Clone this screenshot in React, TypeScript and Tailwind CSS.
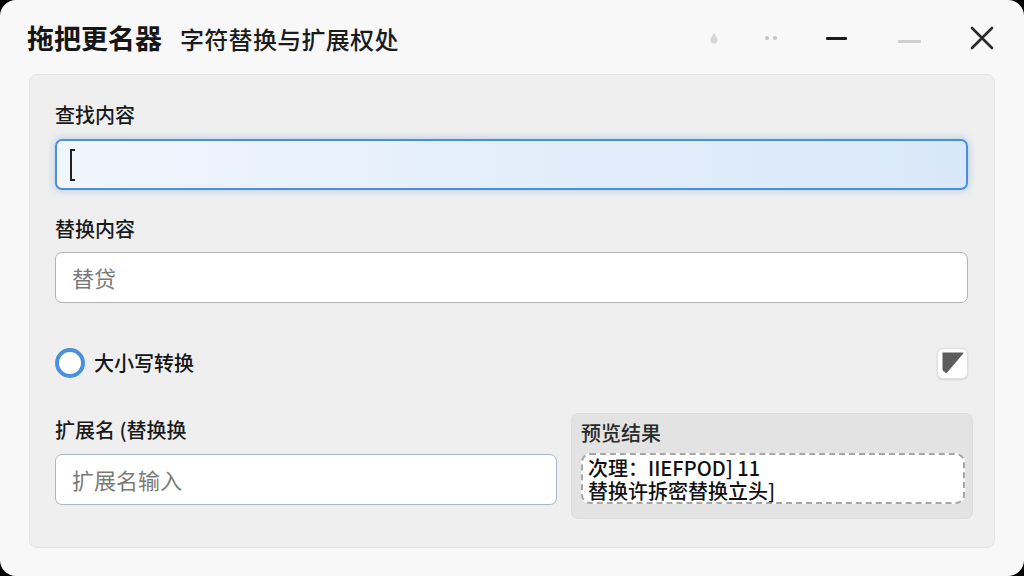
import React from 'react';

const CJK = "font-['Noto_Sans_CJK_SC','Noto_Sans',sans-serif]";

function TitleControls() {
  return (
    <div className="ml-auto flex items-center h-full">
      {/* faint drop */}
      <svg width="10" height="12" viewBox="0 0 10 12" className="mt-[2px]">
        <path d="M5 1 C3 4 1.5 6 1.5 8 a3.5 3.5 0 0 0 7 0 C8.5 6 7 4 5 1Z" fill="#d6d6d6" />
      </svg>
      {/* two dots */}
      <div className="ml-[46px] flex gap-[4px] mt-[2px]">
        <span className="w-[4px] h-[4px] rounded-full bg-[#c4c4c4]" />
        <span className="w-[4px] h-[4px] rounded-full bg-[#c4c4c4]" />
      </div>
      {/* black minus */}
      <div className="ml-[49px] w-[21px] h-[3px] bg-[#1c1c1c] rounded-[1px] mt-[2px]" />
      {/* gray minus */}
      <div className="ml-[51px] w-[23px] h-[3px] bg-[#cfcfcf] rounded-[1px] mt-[8px]" />
      {/* close */}
      <svg width="24" height="24" viewBox="0 0 24 24" className="ml-[49px] mt-[2px]">
        <path d="M2 2 L22 22 M22 2 L2 22" stroke="#2a2a2a" strokeWidth="2.6" strokeLinecap="round" />
      </svg>
    </div>
  );
}

export default function App() {
  return (
    <div className={`w-[1024px] h-[576px] bg-black ${CJK}`}>
      <div className="w-full h-full rounded-[16px] bg-[#f8f8f8] flex flex-col overflow-hidden">
        <header className="h-[74px] shrink-0 flex items-center pl-[27px] pr-[30px]">
          <div className="flex items-baseline mt-[2px]">
            <h1 className="text-[27px] font-bold text-[#161616]">拖把更名器</h1>
            <span className="ml-[18px] text-[24px] font-medium text-[#1c1c1c] tracking-[0.3px]">字符替换与扩展权处</span>
          </div>
          <TitleControls />
        </header>

        <main className="flex-1 mx-[29px] mb-[28px] rounded-[8px] bg-[#efefef] border border-[#e4e4e4] pl-[25px] pr-[26px] pt-[26px] flex flex-col">
          <label className="text-[20px] leading-[28px] font-medium text-[#1a1a1a]">查找内容</label>
          <div className="mt-[10px] h-[51px] rounded-[7px] border-2 border-[#4a8fd8] bg-gradient-to-r from-[#f1f6fd] via-[#e3eefb] to-[#d9e8f8] shadow-[0_0_6px_2px_rgba(120,170,230,0.35)] flex items-center pl-[13px]">
            <span className="w-[5px] h-[32px] border-l-2 border-t-2 border-b-2 border-[#222]" />
          </div>

          <label className="mt-[25px] text-[20px] leading-[28px] font-medium text-[#1a1a1a]">替换内容</label>
          <div className="mt-[9px] h-[51px] rounded-[7px] border border-[#b2b2b2] bg-white flex items-center pl-[16px]">
            <span className="text-[22px] text-[#7a7a7a]">替贷</span>
          </div>

          <div className="mt-[45px] h-[30px] flex items-center justify-between">
            <div className="flex items-center">
              <span className="w-[30px] h-[30px] rounded-full border-[4px] border-[#4a90dc] bg-white" />
              <span className="ml-[9px] text-[20px] font-medium text-[#141414]">大小写转换</span>
            </div>
            <div className="w-[31px] h-[31px] rounded-[6px] bg-white border border-[#dedede] shadow-[0_1px_2px_rgba(0,0,0,0.12)] flex items-center justify-center">
              <svg width="24" height="24" viewBox="0 0 24 24">
                <path d="M1.5 1.5 H22 Q23 1.5 22 2.8 L7 20.5 L5 22.5 L3.2 20.5 Q1.5 20 1.5 18.5 Z" fill="#5c5c5c" />
              </svg>
            </div>
          </div>

          <div className="mt-[35px] flex">
            <div className="w-[502px] pt-[3px] flex flex-col">
              <label className="text-[20px] leading-[28px] font-medium text-[#1a1a1a]">扩展名 (替换换</label>
              <div className="mt-[10px] h-[51px] rounded-[7px] border border-[#a9b6c4] bg-white flex items-center pl-[16px]">
                <span className="text-[22px] text-[#7a7a7a]">扩展名输入</span>
              </div>
            </div>
            <div className="ml-[14px] mr-[-5px] flex-1 h-[106px] rounded-[7px] bg-[#e3e3e3] border border-[#dcdcdc] pl-[9px] pr-[7px] pt-[5px] flex flex-col">
              <span className="text-[20px] leading-[28px] font-medium text-[#2a2a2a]">预览结果</span>
              <div className="mt-[6px] h-[51px] rounded-[9px] bg-white border-2 border-dashed border-[#a6a6a6] px-[5px] flex items-center">
                <p className="text-[20px] leading-[23px] font-medium text-[#111]">
                  次理：IIEFPOD] 11
                  <br />
                  替换许拆密替换立头]
                </p>
              </div>
            </div>
          </div>
        </main>
      </div>
    </div>
  );
}
